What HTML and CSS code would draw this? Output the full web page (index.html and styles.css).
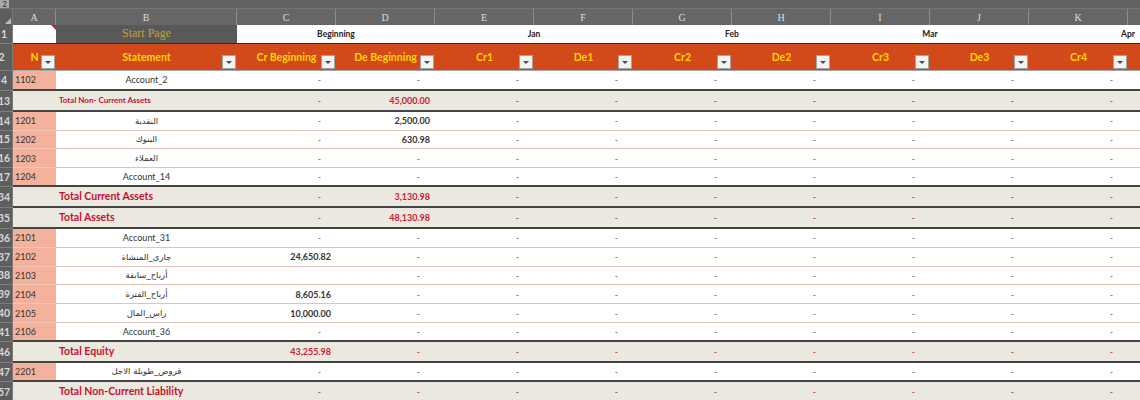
FILE: index.html
```html
<!DOCTYPE html>
<html lang="en">
  <head>
    <meta charset="UTF-8" />
    <title>Trial Balance</title>
    <link rel="stylesheet" href="styles.css">
  </head>
  <body>
    <div class="sheet">
      <div class="strip"><span class="lvl">2</span></div>

      <div class="row colhdr">
        <div class="rh corner"></div>
        <div>A</div><div>B</div><div>C</div><div>D</div><div>E</div><div>F</div>
        <div>G</div><div>H</div><div>I</div><div>J</div><div>K</div><div>L</div>
      </div>

      <div class="row r1">
        <div class="rh"><span>1</span></div>
        <div class="note"></div>
        <div class="start">Start Page</div>
        <div class="m">Beginning</div>
        <div class="m">Jan</div>
        <div class="m">Feb</div>
        <div class="m">Mar</div>
        <div class="m">Apr</div>
      </div>

      <div class="row r2">
        <div class="rh"><span>2</span></div>
        <div>N<i class="flt"></i></div>
        <div>Statement<i class="flt"></i></div>
        <div>Cr Beginning<i class="flt"></i></div>
        <div>De Beginning<i class="flt"></i></div>
        <div>Cr1<i class="flt"></i></div>
        <div>De1<i class="flt"></i></div>
        <div>Cr2<i class="flt"></i></div>
        <div>De2<i class="flt"></i></div>
        <div>Cr3<i class="flt"></i></div>
        <div>De3<i class="flt"></i></div>
        <div>Cr4<i class="flt"></i></div>
        <div></div>
      </div>

      <div class="row first end">
        <div class="rh"><span>4</span></div>
        <div class="a">1102</div>
        <div class="b">Account_2</div>
        <div class="v d">-</div><div class="v d">-</div><div class="v d">-</div>
        <div class="v d">-</div><div class="v d">-</div><div class="v d">-</div>
        <div class="v d">-</div><div class="v d">-</div><div class="v d">-</div>
        <div class="v"></div>
      </div>

      <div class="row tot small">
        <div class="rh"><span>13</span></div>
        <div class="a"></div>
        <div class="b">Total Non- Current Assets</div>
        <div class="v d">-</div><div class="v">45,000.00</div><div class="v d">-</div>
        <div class="v d">-</div><div class="v d">-</div><div class="v d">-</div>
        <div class="v d">-</div><div class="v d">-</div><div class="v d">-</div>
        <div class="v"></div>
      </div>

      <div class="row">
        <div class="rh"><span>14</span></div>
        <div class="a">1201</div>
        <div class="b ar">النقدية</div>
        <div class="v d">-</div><div class="v">2,500.00</div><div class="v d">-</div>
        <div class="v d">-</div><div class="v d">-</div><div class="v d">-</div>
        <div class="v d">-</div><div class="v d">-</div><div class="v d">-</div>
        <div class="v"></div>
      </div>

      <div class="row">
        <div class="rh"><span>15</span></div>
        <div class="a">1202</div>
        <div class="b ar">البنوك</div>
        <div class="v d">-</div><div class="v">630.98</div><div class="v d">-</div>
        <div class="v d">-</div><div class="v d">-</div><div class="v d">-</div>
        <div class="v d">-</div><div class="v d">-</div><div class="v d">-</div>
        <div class="v"></div>
      </div>

      <div class="row">
        <div class="rh"><span>16</span></div>
        <div class="a">1203</div>
        <div class="b ar">العملاء</div>
        <div class="v d">-</div><div class="v d">-</div><div class="v d">-</div>
        <div class="v d">-</div><div class="v d">-</div><div class="v d">-</div>
        <div class="v d">-</div><div class="v d">-</div><div class="v d">-</div>
        <div class="v"></div>
      </div>

      <div class="row end">
        <div class="rh"><span>17</span></div>
        <div class="a">1204</div>
        <div class="b">Account_14</div>
        <div class="v d">-</div><div class="v d">-</div><div class="v d">-</div>
        <div class="v d">-</div><div class="v d">-</div><div class="v d">-</div>
        <div class="v d">-</div><div class="v d">-</div><div class="v d">-</div>
        <div class="v"></div>
      </div>

      <div class="row tot">
        <div class="rh"><span>34</span></div>
        <div class="a"></div>
        <div class="b">Total Current Assets</div>
        <div class="v d">-</div><div class="v">3,130.98</div><div class="v d">-</div>
        <div class="v d">-</div><div class="v d">-</div><div class="v d">-</div>
        <div class="v d">-</div><div class="v d">-</div><div class="v d">-</div>
        <div class="v"></div>
      </div>

      <div class="row tot">
        <div class="rh"><span>35</span></div>
        <div class="a"></div>
        <div class="b">Total Assets</div>
        <div class="v d">-</div><div class="v">48,130.98</div><div class="v d">-</div>
        <div class="v d">-</div><div class="v d">-</div><div class="v d">-</div>
        <div class="v d">-</div><div class="v d">-</div><div class="v d">-</div>
        <div class="v"></div>
      </div>

      <div class="row">
        <div class="rh"><span>36</span></div>
        <div class="a">2101</div>
        <div class="b">Account_31</div>
        <div class="v d">-</div><div class="v d">-</div><div class="v d">-</div>
        <div class="v d">-</div><div class="v d">-</div><div class="v d">-</div>
        <div class="v d">-</div><div class="v d">-</div><div class="v d">-</div>
        <div class="v"></div>
      </div>

      <div class="row">
        <div class="rh"><span>37</span></div>
        <div class="a">2102</div>
        <div class="b ar">جارى_المنشاة</div>
        <div class="v">24,650.82</div><div class="v d">-</div><div class="v d">-</div>
        <div class="v d">-</div><div class="v d">-</div><div class="v d">-</div>
        <div class="v d">-</div><div class="v d">-</div><div class="v d">-</div>
        <div class="v"></div>
      </div>

      <div class="row">
        <div class="rh"><span>38</span></div>
        <div class="a">2103</div>
        <div class="b ar">أرباح_سابقة</div>
        <div class="v"></div><div class="v d">-</div><div class="v d">-</div>
        <div class="v d">-</div><div class="v d">-</div><div class="v d">-</div>
        <div class="v d">-</div><div class="v d">-</div><div class="v d">-</div>
        <div class="v"></div>
      </div>

      <div class="row">
        <div class="rh"><span>39</span></div>
        <div class="a">2104</div>
        <div class="b ar">أرباح_الفترة</div>
        <div class="v">8,605.16</div><div class="v d">-</div><div class="v d">-</div>
        <div class="v d">-</div><div class="v d">-</div><div class="v d">-</div>
        <div class="v d">-</div><div class="v d">-</div><div class="v d">-</div>
        <div class="v"></div>
      </div>

      <div class="row">
        <div class="rh"><span>40</span></div>
        <div class="a">2105</div>
        <div class="b ar">راس_المال</div>
        <div class="v">10,000.00</div><div class="v d">-</div><div class="v d">-</div>
        <div class="v d">-</div><div class="v d">-</div><div class="v d">-</div>
        <div class="v d">-</div><div class="v d">-</div><div class="v d">-</div>
        <div class="v"></div>
      </div>

      <div class="row end">
        <div class="rh"><span>41</span></div>
        <div class="a">2106</div>
        <div class="b">Account_36</div>
        <div class="v d">-</div><div class="v d">-</div><div class="v d">-</div>
        <div class="v d">-</div><div class="v d">-</div><div class="v d">-</div>
        <div class="v d">-</div><div class="v d">-</div><div class="v d">-</div>
        <div class="v"></div>
      </div>

      <div class="row tot">
        <div class="rh"><span>46</span></div>
        <div class="a"></div>
        <div class="b">Total Equity</div>
        <div class="v">43,255.98</div><div class="v d">-</div><div class="v d">-</div>
        <div class="v d">-</div><div class="v d">-</div><div class="v d">-</div>
        <div class="v d">-</div><div class="v d">-</div><div class="v d">-</div>
        <div class="v"></div>
      </div>

      <div class="row end">
        <div class="rh"><span>47</span></div>
        <div class="a">2201</div>
        <div class="b ar">قروض_طويلة الاجل</div>
        <div class="v d">-</div><div class="v d">-</div><div class="v d">-</div>
        <div class="v d">-</div><div class="v d">-</div><div class="v d">-</div>
        <div class="v d">-</div><div class="v d">-</div><div class="v d">-</div>
        <div class="v"></div>
      </div>

      <div class="row tot">
        <div class="rh"><span>57</span></div>
        <div class="a"></div>
        <div class="b">Total Non-Current Liability</div>
        <div class="v d">-</div><div class="v d">-</div><div class="v d">-</div>
        <div class="v d">-</div><div class="v d">-</div><div class="v d">-</div>
        <div class="v d">-</div><div class="v d">-</div><div class="v d">-</div>
        <div class="v"></div>
      </div>
    </div>
  </body>
</html>
```

FILE: styles.css
```css
body {
  margin: 0;
  background-color: #fff;
  font-family: "Lato", "DejaVu Sans", sans-serif;
}

.sheet {
  width: 1140px;
  height: 400px;
  overflow: hidden;
  background-color: #fff;
}

.strip {
  height: 9px;
  background-color: #636363;
  border-bottom: 1px solid #747474;
  box-sizing: border-box;
}

.lvl {
  display: block;
  width: 9px;
  height: 8px;
  background-color: #a9a9a9;
  color: #2e2e2e;
  font-size: 8px;
  line-height: 8px;
  text-align: center;
}

.row {
  display: grid;
  grid-template-columns: 13px 43px 181px repeat(10, 99px);
  height: 18.8px;
}

.row > div {
  display: flex;
  align-items: center;
  overflow: hidden;
  white-space: nowrap;
  box-sizing: border-box;
  border-bottom: 1px solid #e2c2b9;
}

/* row numbers */
.row > .rh {
  background-color: #5e5e5e;
  color: #d6d6d6;
  font-size: 10.5px;
  font-weight: 700;
  border-bottom: 1px solid #7e7e7e;
  border-right: 1px solid #7a7a7a;
}

.rh span {
  display: block;
  flex: none;
  width: 26px;
  margin-left: -9px;
  text-align: center;
}

/* column letters */
.colhdr {
  height: 16px;
}

.colhdr > div {
  justify-content: center;
  background-color: #666;
  color: #dedede;
  font-family: "Liberation Serif", serif;
  font-size: 10px;
  border-bottom: none;
  border-right: 1px solid #8c8c8c;
}

.colhdr > .corner {
  position: relative;
  border-bottom: none;
}

.corner::after {
  content: "";
  position: absolute;
  right: 1px;
  bottom: 1px;
  border-left: 6px solid transparent;
  border-bottom: 6px solid #bdbdbd;
}

/* row 1 */
.r1 > div {
  border-bottom: 1px solid #2b2b2b;
}

.r1 > .note {
  position: relative;
  background-color: #fff;
}

.note::after {
  content: "";
  position: absolute;
  top: 0;
  right: 0;
  border-left: 5px solid transparent;
  border-top: 5px solid #e8141b;
}

.r1 > .start {
  justify-content: center;
  background-color: #595959;
  color: #c2a23e;
  font-family: "Liberation Serif", serif;
  font-size: 12px;
}

.r1 > .m {
  grid-column: span 2;
  justify-content: center;
  color: #222;
  font-size: 8.5px;
  font-weight: 700;
}

/* table header */
.r2 {
  height: 27px;
}

.r2 > div {
  position: relative;
  justify-content: center;
  background-color: #d24a1a;
  color: #ffd400;
  font-size: 10.5px;
  font-weight: 700;
  border-bottom: 1px solid #a8a8a8;
}

.flt {
  position: absolute;
  right: 1px;
  bottom: 1px;
  width: 14px;
  height: 14px;
  box-sizing: border-box;
  border: 1px solid #a3a3a3;
  background-color: #f3f3f3;
}

.flt::after {
  content: "";
  position: absolute;
  left: 3px;
  top: 5px;
  border-left: 3px solid transparent;
  border-right: 3px solid transparent;
  border-top: 3px solid #4a4a4a;
}

/* body cells */
.row > .a {
  background-color: #f4b29c;
  color: #333;
  font-size: 9px;
  padding-left: 2px;
  border-bottom-color: #f6c6b6;
}

.row > .b {
  justify-content: center;
  color: #333;
  font-size: 9px;
}

.row > .ar {
  font-family: "DejaVu Sans", sans-serif;
  font-size: 8.5px;
}

.row > .v {
  justify-content: flex-end;
  padding-right: 5px;
  color: #333;
  font-size: 9px;
  font-weight: 700;
}

.row > .d {
  padding-right: 15px;
  color: #666;
  font-weight: 400;
}

.first {
  height: 20px;
}

.end > div:not(.rh) {
  border-bottom: 2px solid #444;
}

/* totals */
.tot {
  height: 21px;
}

.tot > div:not(.rh) {
  background-color: #ebe8e0;
  border-bottom: 2px solid #444;
}

.tot > .a {
  background-color: #ebe8e0;
}

.tot > .b {
  justify-content: flex-start;
  padding-left: 3px;
  color: #c8102e;
  font-size: 10.5px;
  font-weight: 700;
}

.small > .b {
  font-size: 8px;
}

.tot > .v {
  color: #cc1a30;
}
```
